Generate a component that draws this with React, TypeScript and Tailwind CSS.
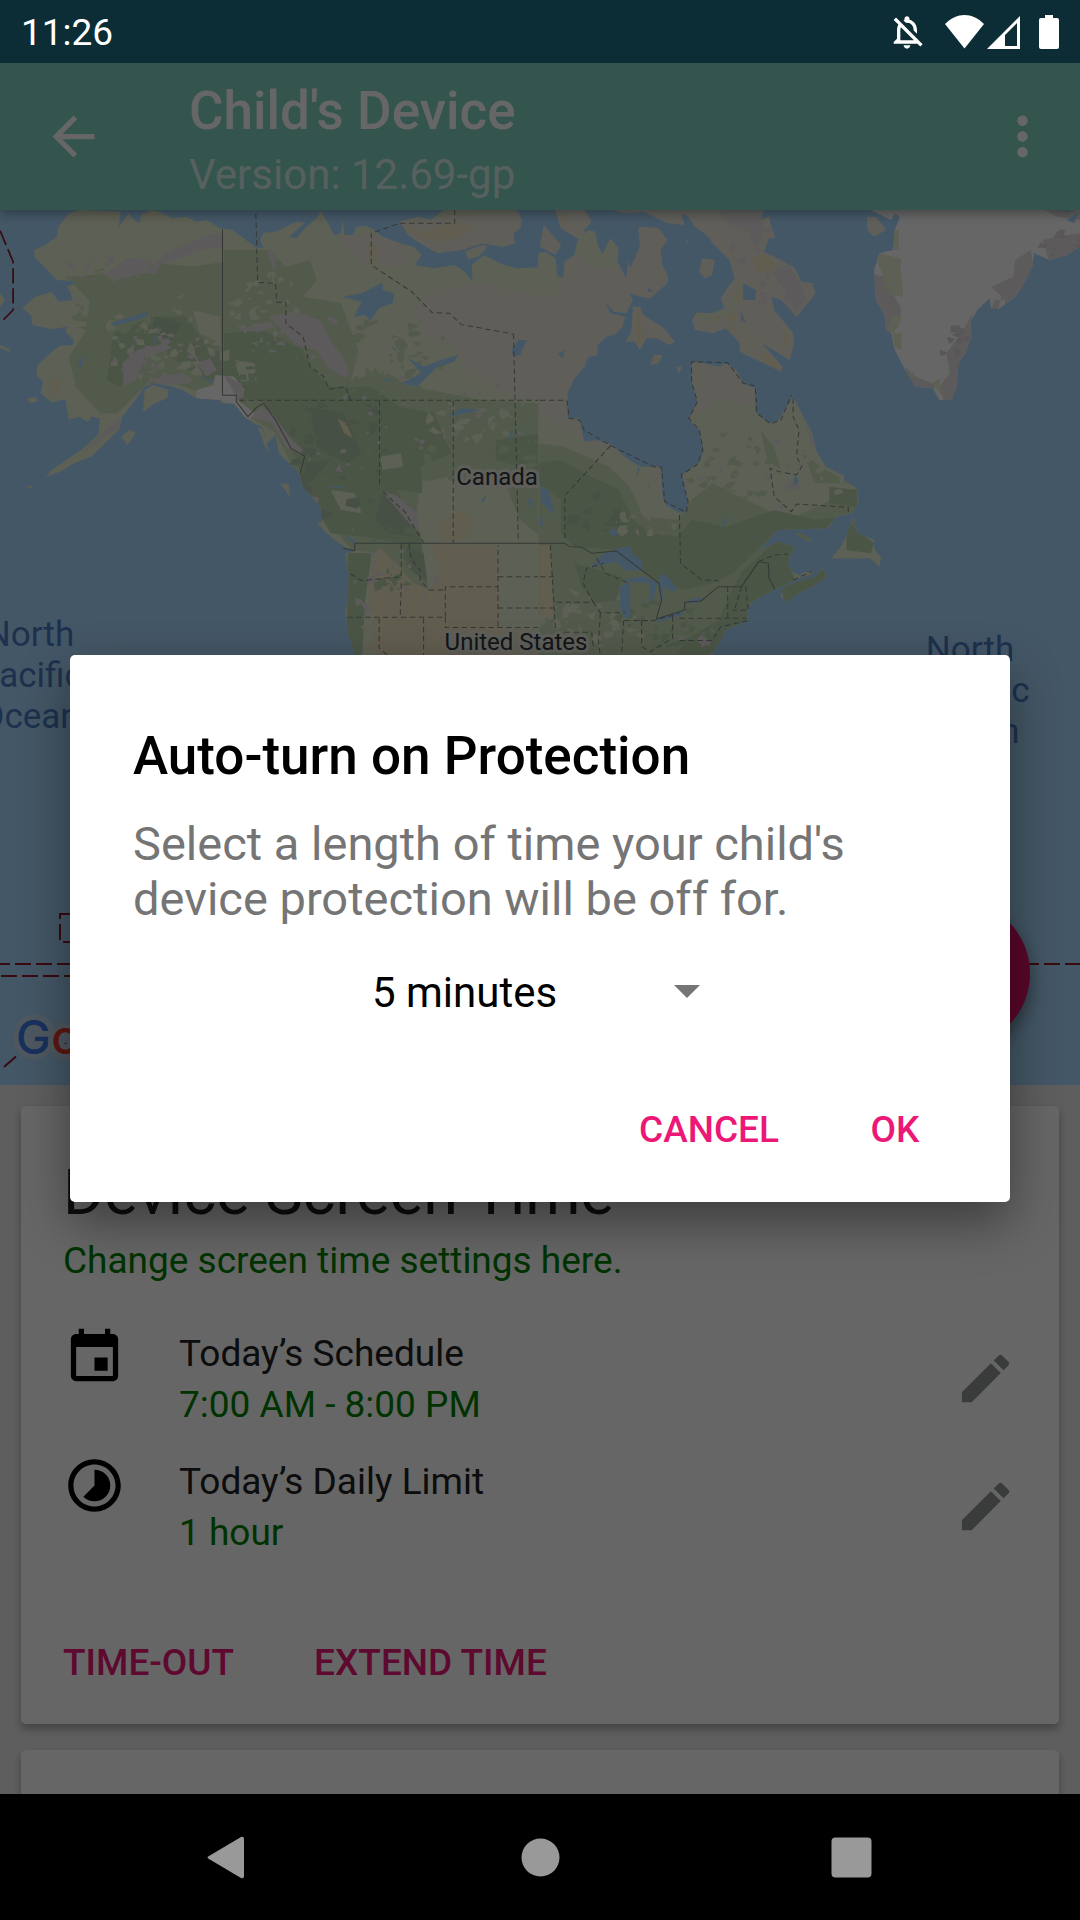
import React, { useState } from 'react';
import {
  MdArrowBack,
  MdEdit,
  MdEvent,
  MdMoreVert,
  MdOutlineNotificationsOff,
  MdTimelapse,
} from 'react-icons/md';

// Coastlines, west and east halves of the map share one vertical scale
const WEST_LAND =
  'M230 30L195 45 170 80 165 110 130 135 100 150 100 170 165 240 225 245 195 260 205 275 210 300 170 305 150 275 100 292 65 325 90 345 95 375 150 388 195 380 190 395 215 420 210 435 175 437 150 455 135 470 110 495 105 525 125 545 118 580 150 608 190 597 200 660 230 650 255 665 265 650 290 655 285 705 235 750 185 785 150 810 133 830 175 815 215 790 265 770 300 735 345 690 355 650 375 625 410 575 420 560 450 550 500 560 530 570 570 595 640 600 645 610 680 612 710 650 740 672 760 680 775 730 800 705 810 760 840 790 870 820 880 860 930 920 935 965 920 970 965 1015 1000 1040 1030 1055 1003 1060 1005 1080 1013 1120 1010 1200 1003 1230 1010 1300 1030 1360 1035 1400 1570 1400 1570 202 1500 205 1450 190 1405 165 1370 195 1372 245 1350 215 1320 195 1260 205 1205 195 1210 185 1225 165 1200 140 1160 130 1110 110 1080 85 1060 78 1035 80 1025 105 1000 105 995 55 990 100 970 105 950 65 930 32 920 55 890 80 860 115 840 110 885 68 860 65 800 95 765 98 755 120 765 145 740 140 675 90 640 85 600 60 570 65 540 50 500 55 460 35 440 30 410 45 405 70 385 55 375 38 345 80 350 35ZM1160 65L1215 50 1250 60 1290 30 1500 30 1515 60 1510 85 1490 100 1495 130 1460 140 1400 130 1340 150 1270 160 1220 130 1185 105ZM1350 155L1400 135 1415 140 1390 170 1360 178ZM415 635L420 570 445 555 490 570 485 595 450 610ZM352 710L375 690 395 700 370 735ZM80 595L105 592 108 605 85 608ZM0 280L15 300 0 320ZM0 435L30 448 28 456 0 445ZM78 858L97 858 85 866ZM815 850L838 852 842 892ZM748 682L765 690 782 760 770 740Z';

const EAST_LAND =
  'M0 160L15 155 45 175 50 230 68 230 70 185 100 165 110 120 140 90 160 95 165 125 180 165 205 115 228 145 225 185 250 235 258 180 262 205 290 140 285 85 300 80 345 85 370 120 350 150 355 195 373 230 370 250 320 295 290 290 258 278 270 300 250 340 215 335 190 310 205 340 247 350 240 380 220 402 190 412 168 435 165 468 140 470 130 500 100 535 80 580 80 655 115 655 128 725 165 720 210 735 250 775 290 800 350 800 357 895 365 915 405 940 425 935 430 905 412 825 465 785 475 750 463 690 432 660 457 605 440 545 440 490 455 485 520 500 540 490 570 510 590 550 625 565 625 635 665 670 690 665 715 620 735 590 770 660 790 700 803 755 830 800 885 828 880 840 920 865 925 910 905 940 860 950 835 985 690 990 620 1070 580 1110 640 1050 690 1025 740 1040 720 1080 730 1115 765 1130 740 1140 680 1170 615 1205 600 1240 605 1260 540 1290 525 1320 505 1350 500 1400 -5 1400 -5 160ZM210 30L245 40 300 35 370 70 420 75 410 40 430 50 450 80 490 110 500 130 550 180 565 235 540 270 525 295 535 325 500 340 455 338 442 360 450 390 500 400 540 385 580 430 580 455 640 485 700 515 705 500 645 430 725 480 738 430 735 400 700 355 680 330 672 290 700 300 745 350 785 300 800 280 790 250 760 245 740 205 700 180 650 155 665 115 685 115 670 75 665 50 640 60 650 30ZM270 320L290 320 300 345 360 385 392 425 375 435 340 415 310 415 290 450 275 425 248 425 265 395ZM330 465L355 465 345 490 320 495ZM470 175L507 180 500 225 480 235 462 215ZM10 75L62 135 45 165 0 140ZM45 30L130 30 150 65 130 90 125 125 100 110 60 85ZM910 950L920 1000 970 1020 970 1045 990 1075 985 1100 960 1075 848 1075 880 1030 900 980ZM735 1150L800 1130 820 1105 833 1130 800 1155 750 1180 715 1205 700 1190 705 1165ZM755 1120L795 1115 780 1130ZM740 1000L765 1003 790 1022 770 1020ZM398 500L413 500 403 523ZM418 132L434 113 430 125ZM950 50L975 50 1005 90 970 110 950 90Z';

const GREENLAND =
  'M960 30L1568 30 1568 140 1530 165 1480 180 1435 160 1430 200 1400 260 1380 290 1330 328 1310 325 1305 295 1270 330 1250 365 1253 410 1235 460 1215 490 1210 560 1195 600 1160 600 1140 565 1090 560 1055 500 1030 450 1020 400 1005 390 1000 345 975 300 970 210 985 160 1025 150 1030 90 1045 50 1030 40 1020 60Z';

// Jagged terrain patches spread over an ellipse, stable for a given seed
function patches(seed: number, cx: number, cy: number, rx: number, ry: number, count: number, size: number) {
  let s = seed * 7919;
  const rand = () => {
    s = (s * 16807) % 2147483647;
    return s / 2147483647;
  };
  let d = '';
  for (let i = 0; i < count; i++) {
    const a = rand() * Math.PI * 2;
    const r = Math.sqrt(rand());
    const x = cx + Math.cos(a) * r * rx;
    const y = cy + Math.sin(a) * r * ry;
    const points = 3 + Math.floor(rand() * 4);
    const w = size * (0.4 + rand());
    const h = w * (0.4 + rand() * 0.8);
    const turn = rand() * 3;
    for (let p = 0; p < points; p++) {
      const t = turn + (p / points) * Math.PI * 2;
      const k = 0.3 + rand();
      d += `${p ? 'L' : 'M'}${Math.round(x + Math.cos(t) * w * k)} ${Math.round(y + Math.sin(t) * h * k)}`;
    }
    d += 'Z';
  }
  return d;
}

const C = {
  land: '#e8efd2',
  tundra: '#eeebdf',
  green: '#cbe2bb',
  forest: '#b9d4b0',
  deep: '#afc9aa',
  sand: '#f2e8c6',
  rock: '#e6e1e2',
  snow: '#ffffff',
  water: '#aadaff',
};

function WorldMap() {
  return (
    <svg
      className="block h-full w-full"
      viewBox="0 0 1080 875"
      preserveAspectRatio="xMidYMid slice"
      role="img"
      aria-label="Map of North America"
      fontFamily="Roboto, sans-serif"
    >
      <rect width="1080" height="875" fill={C.water} />

      <g transform="translate(0 -10) scale(.3444 .3333)">
        <clipPath id="west"><path d={WEST_LAND} /></clipPath>
        <path d={WEST_LAND} fill={C.land} />
        <g clipPath="url(#west)">
          <path fill={C.tundra} d="M980 110L1130 100 1200 160 1150 200 1070 195 1010 150ZM1250 270L1390 250 1570 290 1570 600 1480 590 1350 520 1330 440 1240 410 1200 330ZM1300 650L1400 630 1430 690 1380 740 1310 700ZM1170 60L1570 30 1570 160 1200 150Z" />
          <path fill={C.green} d="M190 230L330 220 460 190 560 200 650 185 650 590 560 570 480 540 420 560 340 640 290 640 220 560 200 470 250 390 260 300ZM650 150L780 150 830 200 900 180 920 240 880 290 990 310 1040 450 1020 540 1100 520 1200 560 1300 580 1400 600 1570 610 1570 850 1500 830 1400 850 1300 830 1220 850 1200 1030 1250 1180 1180 1170 1100 1060 1020 1050 900 900 800 700 650 600ZM1470 860L1570 830 1570 1010 1510 960Z" />
          <path fill={C.forest} d="M440 350L540 350 590 420 640 460 640 520 540 510 470 440 380 470 350 560 310 540 330 400ZM650 400L760 390 880 450 900 500 960 560 1080 560 1160 620 1260 640 1310 760 1220 800 1230 880 1150 870 1220 1000 1240 1150 1180 1100 1160 1030 1060 1010 960 1000 880 860 860 770 760 600 650 590ZM1440 720L1570 700 1570 820 1440 780ZM1010 1060L1080 1060 1060 1200 1050 1400 1005 1400Z" />
          <path fill={C.deep} d="M900 620L1000 640 1050 760 1010 790 920 740ZM880 790L960 780 900 850ZM1110 880L1170 920 1200 1010 1130 1000 1090 960ZM450 350L530 370 500 420 440 400ZM1180 1040L1230 1060 1240 1140 1190 1110Z" />
          <path fill={C.sand} d="M1270 950L1330 930 1370 950 1360 1010 1280 1030ZM980 655L1005 670 1025 715 1000 700ZM1250 1035L1450 1035 1450 1285 1570 1290 1570 1400 1090 1400 1080 1260 1070 1150 1100 1040 1150 1090 1200 1150 1250 1170 1280 1110ZM1160 80L1240 95 1330 60 1370 90 1270 130ZM150 540L180 535 175 570 145 590ZM1070 120L1095 140 1090 200 1070 180Z" />
          <path fill={C.land} d="M1230 840L1310 850 1320 900 1310 950 1250 990 1215 930ZM680 480L740 490 745 540 700 545ZM960 870L1030 880 1050 940 990 930ZM1105 770L1165 760 1170 800 1110 810ZM1440 1035L1570 1035 1570 1220 1450 1220ZM560 330L640 350 640 430 580 400Z" />
          <path fill={C.green} d={patches(11, 360, 300, 180, 110, 60, 16)} />
          <path fill={C.land} d={patches(21, 480, 420, 180, 130, 45, 16)} />
          <path fill={C.green} d={patches(17, 1150, 470, 160, 120, 45, 16)} />
          <path fill={C.land} d={patches(29, 780, 330, 120, 110, 35, 16)} />
          <path fill={C.forest} d={patches(31, 760, 520, 160, 100, 40, 20)} />
          <path fill={C.deep} d={patches(37, 980, 760, 150, 200, 30, 22)} />
          <path fill={C.green} d={patches(41, 1400, 740, 170, 110, 45, 18)} />
          <path fill={C.land} d={patches(43, 1380, 660, 150, 60, 30, 15)} />
          <path fill={C.sand} d={patches(47, 1160, 1270, 120, 110, 16, 20)} />
          <path fill={C.forest} d={patches(53, 1150, 1080, 90, 100, 22, 14)} />
          <path fill={C.rock} d="M440 200L480 160 560 125 610 105 648 100 645 140 580 150 520 175 470 190 450 225 390 210ZM300 225L370 175 440 180 430 215 340 240ZM360 560L355 490 400 450 480 430 500 445 420 470 395 540ZM430 540L520 520 560 535 550 550 470 555ZM780 350L850 335 930 360 960 420 1000 480 1015 525 1000 535 950 500 920 450 860 435 820 390ZM690 390L780 365 800 380 750 395ZM570 490L610 475 630 510 600 530ZM760 620L790 640 840 710 880 750 870 765 830 740 790 670 720 650ZM285 710L345 655 350 680 280 730 175 805 160 815 230 765ZM1110 875L1150 885 1210 940 1220 1000 1180 960ZM775 150L800 160 800 210 790 200Z" />
          <path fill={C.rock} d={patches(61, 470, 470, 160, 80, 38, 12)} />
          <path fill={C.rock} d={patches(67, 860, 420, 130, 100, 26, 12)} />
          <path fill={C.rock} d={patches(71, 300, 210, 120, 40, 20, 11)} />
          <path fill={C.rock} d={patches(73, 1150, 1150, 130, 120, 22, 11)} />
          <path fill={C.rock} d={patches(79, 1250, 620, 300, 160, 30, 9)} />
          <path fill={C.rock} d={patches(83, 960, 880, 120, 160, 16, 11)} />
          <path fill={C.snow} d="M570 570L620 555 625 525 680 530 710 570 690 600 740 640 720 665 680 612 640 605 570 595Z" />
          <path fill={C.rock} d="M650 525L700 550 710 590 690 600 670 560Z" />
          <path fill={C.water} d="M995 290L1050 280 1110 248 1112 270 1145 280 1140 310 1100 325 1075 362 1060 345 1028 350 1050 305ZM1165 550L1225 520 1180 470 1230 500 1280 480 1330 465 1320 485 1270 500 1210 560ZM1300 650L1340 625 1400 630 1350 640ZM1485 450L1505 420 1530 420 1510 465 1490 470ZM1130 435L1160 455 1145 450ZM1105 538L1135 535 1130 545ZM320 370L430 335 425 350 330 378ZM445 400L455 420 445 435ZM1480 700L1490 690 1485 730ZM1530 890L1548 905 1540 925ZM1395 905L1415 880 1405 905ZM950 860L990 858 990 866ZM1000 1005L1030 1020 1030 1035ZM575 525L620 545 610 550ZM225 500L240 465 240 500Z" />
        </g>
        <g fill="none" stroke="#868a84" strokeWidth="3">
          <path d="M646 88V586H686V605L720 650 745 622 765 610 800 660 845 745 885 768 872 820M996 1045L1030 1052V1030H1570" />
          <path strokeDasharray="16 10" d="M743 42L748 247 800 250 804 307H830V370L880 410 900 500 940 530 955 567 1003 560 1018 600M1570 601H686M1102 603V860M1112 875L1175 935 1230 1028M1316 603V1028M1491 402L1505 1028M1320 30V70H1160L1078 100V195L1195 275 1255 338 1305 340 1340 374 1490 402M1018 1122L1050 1142 1165 1130V1032M1187 1032L1195 1080 1220 1110V1140L1245 1170H1293M1165 1150L1162 1252M1008 1252H1293V1160H1446V1035M1101 1255V1345L1125 1365M1230 1255V1400M1293 1252V1283H1570M1446 1130H1570M1446 1160V1283M1446 1224H1570" />
        </g>
        <path d="M0 92L38 185V330L0 370" fill="none" stroke="#8f1a26" strokeWidth="5" strokeDasharray="46 14" />
      </g>

      <g transform="translate(540 -10) scale(.3444 .3333)">
        <clipPath id="east"><path d={EAST_LAND} /></clipPath>
        <clipPath id="greenland"><path d={GREENLAND} /></clipPath>
        <path d={EAST_LAND} fill={C.tundra} />
        <g clipPath="url(#east)">
          <path fill={C.land} d="M-5 640L60 680 120 720 300 780 370 920 430 940 430 660 520 600 640 620 700 660 740 600 830 800 930 870 930 960 600 1000 560 1400 -5 1400ZM0 160L60 170 50 290 0 280ZM440 330L540 330 590 220 570 330 500 370 450 350ZM100 110L160 90 220 130 220 200 150 200 90 160ZM840 940L1000 940 1000 1110 690 1210 690 1120Z" />
          <path fill={C.green} d="M-5 730L70 740 200 800 260 860 300 950 400 960 440 900 500 850 640 920 720 960 930 860 930 1000 640 1060 560 1400 -5 1400ZM640 690L680 740 700 810 660 780ZM760 760L830 810 900 850 800 850Z" />
          <path fill={C.forest} d="M-5 790L60 780 150 830 230 870 270 960 320 1000 400 1010 440 960 540 980 680 930 800 960 860 950 830 985 690 990 620 1060 560 1120 500 1150 420 1170 350 1150 220 1050 100 1040 60 1000 60 900 -5 850ZM590 1110L690 1020 740 1040 720 1080 740 1140 610 1210 600 1270 540 1290 500 1400 380 1400 420 1320 520 1260 560 1160ZM100 1090L240 1130 220 1200 160 1210 120 1160ZM840 860L920 870 920 920 840 910ZM700 1160L840 1100 830 1150 710 1210ZM890 960L920 990 970 1030 960 1060 890 1050Z" />
          <path fill={C.sand} d="M620 180L650 160 685 190 670 215 625 215ZM540 345L570 340 570 370 545 365ZM650 450L700 500 690 510 640 475ZM275 340L292 340 300 420 285 440ZM705 385L725 410 710 450ZM560 275L585 280 580 320ZM-5 1035L30 1035 40 1250 -5 1260ZM320 475L350 470 340 488ZM50 40L80 45 70 80Z" />
          <path fill={C.rock} d="M520 30L640 30 650 90 630 150 600 90 550 80ZM670 215L720 195 750 240 770 290 745 340 710 270ZM710 840H755V868H715ZM770 660L803 750 790 740Z" />
          <path fill={C.green} d={patches(101, 560, 800, 140, 110, 30, 16)} />
          <path fill={C.land} d={patches(103, 800, 840, 90, 60, 22, 13)} />
          <path fill={C.land} d={patches(107, 150, 1270, 160, 100, 36, 18)} />
          <path fill={C.forest} d={patches(109, 330, 1280, 120, 90, 22, 18)} />
          <path fill={C.deep} d={patches(113, 180, 930, 110, 70, 12, 22)} />
          <path fill={C.land} d={patches(127, 310, 960, 90, 50, 20, 12)} />
          <path fill={C.rock} d={patches(131, 450, 1330, 80, 60, 14, 11)} />
          <path fill={C.rock} d={patches(137, 600, 850, 330, 130, 26, 8)} />
          <path fill={C.sand} d={patches(139, 600, 400, 130, 60, 10, 10)} />
          <path fill={C.rock} d={patches(149, 640, 200, 110, 130, 22, 12)} />
          <path fill={C.water} d="M590 250L628 270 625 300 590 300ZM145 1105L185 1060 225 1045 265 1040 270 1065 295 1080 300 1112 250 1112 220 1085 180 1095ZM232 1160L262 1145 262 1250 245 1255 232 1220ZM240 1140L300 1128 340 1148 330 1200 315 1205 320 1150 260 1145ZM345 1150L350 1120 375 1135 398 1165 385 1175 360 1160 355 1205ZM338 1255L420 1232 410 1245 345 1268ZM418 1210L445 1195 480 1195 455 1210ZM0 860L25 870 42 945 5 910ZM200 995L215 985 228 1000 215 1012ZM735 840L743 825 752 843 740 858ZM52 462L70 450 68 478ZM0 945L12 980 0 975ZM525 985L535 955 545 960ZM278 835L285 800 290 805ZM315 262L328 276 313 276ZM580 330L598 365 585 362Z" />
        </g>
        <path d={GREENLAND} fill={C.snow} />
        <g clipPath="url(#greenland)">
          <path fill={C.rock} d="M1425 150L1380 180 1375 230 1310 260 1340 290 1330 330 1400 320 1440 240ZM1255 340L1225 400 1180 460 1190 520 1160 560 1175 610 1220 600 1260 420ZM960 220L1000 230 1050 330 1040 380 1010 400 960 310ZM1060 500L1090 530 1150 555 1140 580 1080 570ZM1460 120L1500 110 1568 100 1568 150 1480 190ZM1465 30L1568 30 1568 60 1500 50ZM1320 300H1350V330H1310Z" />
          <path fill={C.land} d="M985 160L1045 175 1055 290 1020 285 1000 230 980 190ZM1005 390L1030 340 1050 360 1025 400ZM1025 400L1050 400 1050 450 1030 440ZM1028 90H1042V150H1028ZM1070 515L1090 520 1080 540ZM1140 550L1160 535 1165 585Z" />
          <path fill={C.sand} d={patches(151, 1020, 220, 30, 60, 6, 11)} />
          <path fill="#dcd6da" d={patches(157, 1210, 460, 40, 90, 14, 13)} />
          <path fill="#dcd6da" d={patches(163, 1510, 130, 60, 40, 12, 15)} />
          <path fill={C.water} d="M1500 30L1545 32 1535 38ZM1530 60L1568 35 1550 70Z" />
        </g>
        <g fill="none" stroke="#868a84" strokeWidth="3">
          <path d="M-5 1030H72L85 1040 122 1042 150 1060 222 1053 345 1150 353 1200 338 1257 420 1230V1207L468 1203 518 1160H585L635 1085 663 1090 665 1135 682 1168" />
          <path strokeDasharray="16 10" d="M0 601H78L85 655 115 660 128 690 205 737 330 800 353 802 362 905 425 937 430 905 410 825 455 795 473 750 463 690 432 655 457 605 440 545 440 485 545 488 590 550 625 558 630 640 670 672 700 660 730 585M735 595L735 650 752 690 745 770 760 800 745 825 695 815 668 805 680 890 730 935 745 912 895 922V945M205 737L72 887V1020M405 945L408 1090 470 1140 520 1142M30 1035L45 1290M48 1207H155L125 1150 135 1105 185 1090M165 1075L190 1120 258 1150M155 1207L175 1238H248M245 1262H330L405 1240M175 1240L170 1330 180 1400M243 1262L235 1400M295 1262V1340L320 1355 385 1315V1240M405 1255H600M405 1322H500L525 1280 605 1262M545 1160V1260M585 1160L565 1230M597 1160L605 1230 560 1232M0 1130H40M0 1224H40M45 1297H150L155 1340M635 1085L680 1065 720 1062M735 1140L790 1115" />
        </g>
      </g>

      <g fill="none" stroke="#8f1a26" strokeWidth="2" strokeDasharray="16 5">
        <path d="M-6 754H1080" />
        <path d="M1 766H300" />
        <path d="M100 732H60V704H100" />
        <path d="M4 857L30 834H100" />
      </g>

      <g fontSize="24" fill="#33363a" textAnchor="middle" stroke="#eceee2" strokeWidth="6" strokeLinejoin="round" paintOrder="stroke">
        <text x="497" y="275">Canada</text>
        <text x="516" y="440">United States</text>
      </g>
      <g fontSize="35" fill="#4a7cc4" textAnchor="middle">
        <text x="30" y="436">North</text>
        <text x="30" y="477">Pacific</text>
        <text x="30" y="518">Ocean</text>
        <text x="970" y="451">North</text>
        <text x="970" y="492">Atlantic</text>
        <text x="970" y="533">Ocean</text>
      </g>
      <text x="16" y="844" fontFamily="Inter, sans-serif" fontSize="47" fontWeight="500" stroke="#c6dcef" strokeWidth="11" strokeLinejoin="round" paintOrder="stroke">
        <tspan fill="#3d7be8">G</tspan>
        <tspan fill="#ea3b2a">o</tspan>
        <tspan fill="#fbbc05">o</tspan>
        <tspan fill="#3d7be8">g</tspan>
        <tspan fill="#34a853">l</tspan>
        <tspan fill="#ea3b2a">e</tspan>
      </text>
    </svg>
  );
}

function StatusBar() {
  return (
    <div className="relative z-20 flex h-[63px] shrink-0 items-center bg-[#0c2d35] pr-[21px] pl-[21px] text-white">
      <span className="flex-1 pt-[3px] text-[37px] leading-[44px]">11:26</span>
      <MdOutlineNotificationsOff className="mr-[18px] size-[40px]" aria-hidden="true" />
      <svg className="mr-[3px] h-[34px] w-[39px]" viewBox="0 0 39 34" aria-hidden="true">
        <path d="M0 9C12-3 27-3 39 9L19.500 33.500Z" fill="currentColor" />
      </svg>
      <svg className="mr-[19px] h-[34px] w-[33px]" viewBox="0 0 33 34" aria-hidden="true">
        <path fillRule="evenodd" d="M33 1V34H0ZM30 8L18 20V31H30Z" fill="currentColor" />
      </svg>
      <svg className="h-[34px] w-[20px]" viewBox="0 0 20 34" aria-hidden="true">
        <path d="M6 0H14V3H18Q20 3 20 5V32Q20 34 18 34H2Q0 34 0 32V5Q0 3 2 3H6Z" fill="currentColor" />
      </svg>
    </div>
  );
}

function AppHeader() {
  return (
    <header className="relative z-10 flex h-[147px] shrink-0 items-center bg-[#82d2c3] pr-[26px] pl-[42px] text-white shadow-[0_4px_10px_rgba(0,0,0,0.3)]">
      <button type="button" aria-label="Back" className="mr-[84px]">
        <MdArrowBack className="size-[63px]" />
      </button>
      <div className="flex-1 self-start pt-[17px]">
        <h1 className="text-[53px] leading-[62px] font-medium">Child's Device</h1>
        <p className="mt-2 text-[42px] leading-[49px] text-white/70">Version: 12.69-gp</p>
      </div>
      <button type="button" aria-label="More options">
        <MdMoreVert className="size-[63px]" />
      </button>
    </header>
  );
}

interface SettingRowProps {
  icon: React.ReactNode;
  label: string;
  value: string;
}

function SettingRow({ icon, label, value }: SettingRowProps) {
  return (
    <li className="flex items-center">
      <span className="mr-[53px] self-start text-black">{icon}</span>
      <div className="flex-1 pt-[2px] text-[37px] leading-[51px]">
        <p>{label}</p>
        <p className="text-[#008000]">{value}</p>
      </div>
      <button type="button" aria-label={`Edit ${label}`} className="text-[#919395]">
        <MdEdit className="size-[63px]" />
      </button>
    </li>
  );
}

function ScreenTimeCard() {
  return (
    <section className="rounded-[5px] bg-white px-[42px] pt-[50px] pb-[14px] text-[#212121] shadow-[0_5px_9px_rgba(0,0,0,0.3)]">
      <h2 className="text-[63px] leading-[74px]">Device Screen Time</h2>
      <p className="mt-[9px] text-[37px] leading-[44px] text-[#008000]">Change screen time settings here.</p>
      <ul className="mt-[43px] flex flex-col gap-6">
        <SettingRow icon={<MdEvent className="size-[63px]" />} label="Today’s Schedule" value="7:00 AM - 8:00 PM" />
        <SettingRow icon={<MdTimelapse className="size-[63px]" />} label="Today’s Daily Limit" value="1 hour" />
      </ul>
      <div className="mt-[58px] flex gap-20 text-[37px] leading-[44px] font-medium text-[#ec1877]">
        <button type="button" className="h-[94px]">TIME-OUT</button>
        <button type="button" className="h-[94px]">EXTEND TIME</button>
      </div>
    </section>
  );
}

const DURATIONS = ['5 minutes', '15 minutes', '30 minutes', '1 hour'];

function ProtectionDialog() {
  const [duration, setDuration] = useState(DURATIONS[0]);

  return (
    <div
      role="dialog"
      aria-modal="true"
      aria-labelledby="dialog-title"
      className="w-full rounded-[5px] bg-white pt-[70px] pb-[25px] shadow-[0_20px_50px_rgba(0,0,0,0.4)]"
    >
      <div className="px-[63px]">
        <h2 id="dialog-title" className="text-[53px] leading-[62px] font-medium text-black">
          Auto-turn on Protection
        </h2>
        <label htmlFor="duration" className="mt-[29px] block text-[47px] leading-[55px] text-[#757575]">
          Select a length of time your child's device protection will be off for.
        </label>
        <div className="relative mx-auto mt-[35px] w-[376px]">
          <select
            id="duration"
            value={duration}
            onChange={(e) => setDuration(e.target.value)}
            className="h-[63px] w-full appearance-none bg-transparent pl-5 text-[42px] text-black"
          >
            {DURATIONS.map((d) => (
              <option key={d}>{d}</option>
            ))}
          </select>
          <svg className="pointer-events-none absolute top-[24px] right-[28px] h-[13px] w-[26px]" viewBox="0 0 26 13" aria-hidden="true">
            <path d="M0 0H26L13 13Z" fill="#757575" />
          </svg>
        </div>
      </div>
      <div className="mt-[59px] flex justify-end gap-3 pr-[31px] text-[37px] leading-[44px] font-medium text-[#ec1877]">
        <button type="button" className="h-[94px] px-5">CANCEL</button>
        <button type="button" className="h-[94px] w-[168px]">OK</button>
      </div>
    </div>
  );
}

function NavigationBar() {
  return (
    <nav className="relative z-20 flex h-[126px] shrink-0 items-center justify-center gap-[248px] bg-black text-[#999999]">
      <button type="button" aria-label="Back">
        <svg className="size-[63px]" viewBox="0 0 63 63">
          <path d="M11 33Q8 31.500 11 30L43 11Q46 10 46 13V50Q46 53 43 52Z" fill="currentColor" />
        </svg>
      </button>
      <button type="button" aria-label="Home">
        <svg className="size-[63px]" viewBox="0 0 63 63">
          <circle cx="31.500" cy="31.500" r="19" fill="currentColor" />
        </svg>
      </button>
      <button type="button" aria-label="Recent apps">
        <svg className="size-[63px]" viewBox="0 0 63 63">
          <rect x="11.500" y="11.500" width="40" height="40" rx="4" fill="currentColor" />
        </svg>
      </button>
    </nav>
  );
}

export default function App() {
  return (
    <div className="relative flex h-screen flex-col overflow-hidden bg-[#ebebeb] font-[Roboto,sans-serif]">
      <StatusBar />
      <AppHeader />

      <main className="min-h-0 flex-1 overflow-hidden">
        <div className="relative h-[875px]">
          <WorldMap />
          <button
            type="button"
            aria-label="Protection"
            className="absolute right-[50px] bottom-[38px] size-[147px] rounded-full bg-[#e01068] shadow-[0_8px_18px_rgba(0,0,0,0.4)]"
          />
        </div>
        <div className="flex flex-col gap-[26px] p-[21px]">
          <ScreenTimeCard />
          <section className="h-[200px] rounded-[5px] bg-white shadow-[0_5px_9px_rgba(0,0,0,0.3)]" />
        </div>
      </main>

      <div className="absolute inset-x-0 top-[63px] bottom-[126px] z-10 flex items-center bg-black/60 px-[70px]">
        <ProtectionDialog />
      </div>

      <NavigationBar />
    </div>
  );
}
